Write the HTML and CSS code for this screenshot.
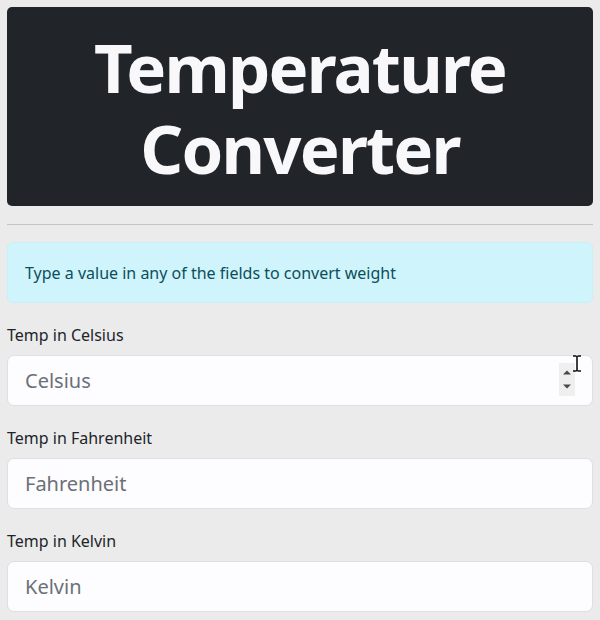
FILE: index.html
```html
<!DOCTYPE html>
<html lang="en">
<head>
<meta charset="utf-8">
<title>Temperature Converter</title>
<link rel="stylesheet" href="styles.css">
</head>
<body>
<main class="page">
  <header class="hero">
    <h1 class="hero-title">Temperature Converter</h1>
  </header>
  <hr class="divider">
  <div class="alert">Type a value in any of the fields to convert weight</div>
  <div class="field">
    <label class="field-label" for="c">Temp in Celsius</label>
    <div class="input-wrap">
      <input class="field-input" id="c" type="text" placeholder="Celsius">
      <span class="spinner">
        <svg width="16" height="33" viewBox="0 0 16 33"><path d="M4 11.5 L8 7.5 L12 11.5 Z" fill="#4a4a4a"/><path d="M4 21.5 L8 25.5 L12 21.5 Z" fill="#4a4a4a"/></svg>
      </span>
      <svg class="cursor" width="10" height="17" viewBox="0 0 10 17"><path d="M1 1 H4 M6 1 H9 M5 1.5 V15.5 M1 16 H4 M6 16 H9 M4 1 L5 1.8 L6 1 M4 16 L5 15.2 L6 16" stroke="#111" stroke-width="1.6" fill="none"/></svg>
    </div>
  </div>
  <div class="field">
    <label class="field-label" for="f">Temp in Fahrenheit</label>
    <input class="field-input" id="f" type="text" placeholder="Fahrenheit">
  </div>
  <div class="field">
    <label class="field-label" for="k">Temp in Kelvin</label>
    <input class="field-input" id="k" type="text" placeholder="Kelvin">
  </div>
</main>
</body>
</html>
```
FILE: styles.css
```css
html, body {
  margin: 0;
  padding: 0;
  background: #ebebeb;
}
body {
  font-family: "Noto Sans", "Open Sans", sans-serif;
  color: #212529;
}
.page {
  padding: 7px 7px 0 7px;
}
.hero {
  background: #212529;
  border-radius: 5px;
  padding: 20px 10px 17px;
  text-align: center;
}
.hero-title {
  margin: 0;
  color: #f8f8fb;
  font-size: 67px;
  line-height: 81px;
  letter-spacing: -1.8px;
  font-weight: 700;
}
.divider {
  margin: 18px 0 17px;
  border: 0;
  border-top: 1px solid #c4c4c6;
}
.alert {
  background: #cff4fc;
  border: 1px solid #c6f1f8;
  border-radius: 6px;
  padding: 18px 17px 17px;
  color: #0b4f5a;
  font-size: 16px;
  line-height: 24px;
  margin-bottom: 20px;
}
.field {
  display: flex;
  flex-direction: column;
  margin-bottom: 20px;
}
.field-label {
  font-size: 16px;
  line-height: 24px;
  margin-bottom: 8px;
}
.input-wrap {
  position: relative;
}
.field-input {
  box-sizing: border-box;
  width: 100%;
  height: 51px;
  padding: 0 17px;
  border: 1px solid #dedfe3;
  border-radius: 7px;
  background: #fdfcfe;
  font-family: inherit;
  font-size: 20px;
  color: #212529;
  outline: none;
}
.field-input::placeholder {
  color: #6b7078;
}
.spinner {
  position: absolute;
  left: 552px;
  top: 8px;
  width: 16px;
  height: 33px;
  background: #efefef;
  display: block;
}
.spinner svg { display: block; }
.cursor {
  position: absolute;
  left: 565px;
  top: 0px;
}
```
